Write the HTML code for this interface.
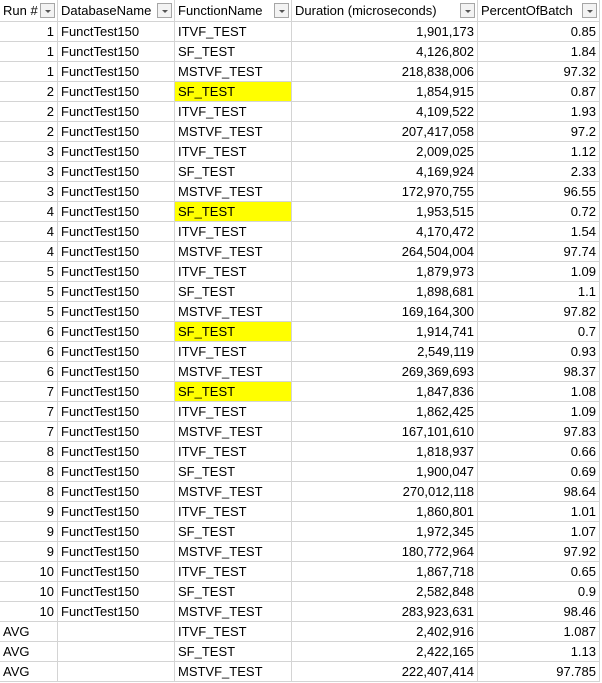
<!DOCTYPE html><html><head><style>
body{margin:0;background:#fff;font-family:"Liberation Sans",sans-serif;font-size:13px;color:#000}
table{border-collapse:separate;border-spacing:0;table-layout:fixed;width:600px}
td{box-sizing:border-box;height:20px;border-right:1px solid #d4d4d4;border-bottom:1px solid #d4d4d4;padding:0 3px;white-space:nowrap;overflow:hidden;line-height:19px}
tr.h td{height:22px;line-height:21px;position:relative}
.r{text-align:right}
.y{background:#ffff00}
.f{position:absolute;right:2px;top:3px;width:15px;height:15px;box-sizing:border-box;border:1px solid #a6a6a6;background:#f3f3f3}
.f:after{content:"";position:absolute;left:4px;top:6px;border-left:3px solid transparent;border-right:3px solid transparent;border-top:3px solid #555}
</style></head><body>
<table>
<colgroup><col style="width:58px"><col style="width:117px"><col style="width:117px"><col style="width:186px"><col style="width:122px"></colgroup>
<tr class="h"><td>Run #<span class="f"></span></td><td>DatabaseName<span class="f"></span></td><td>FunctionName<span class="f"></span></td><td>Duration (microseconds)<span class="f"></span></td><td>PercentOfBatch<span class="f"></span></td></tr>
<tr><td class="r">1</td><td>FunctTest150</td><td>ITVF_TEST</td><td class="r">1,901,173</td><td class="r">0.85</td></tr>
<tr><td class="r">1</td><td>FunctTest150</td><td>SF_TEST</td><td class="r">4,126,802</td><td class="r">1.84</td></tr>
<tr><td class="r">1</td><td>FunctTest150</td><td>MSTVF_TEST</td><td class="r">218,838,006</td><td class="r">97.32</td></tr>
<tr><td class="r">2</td><td>FunctTest150</td><td class="y">SF_TEST</td><td class="r">1,854,915</td><td class="r">0.87</td></tr>
<tr><td class="r">2</td><td>FunctTest150</td><td>ITVF_TEST</td><td class="r">4,109,522</td><td class="r">1.93</td></tr>
<tr><td class="r">2</td><td>FunctTest150</td><td>MSTVF_TEST</td><td class="r">207,417,058</td><td class="r">97.2</td></tr>
<tr><td class="r">3</td><td>FunctTest150</td><td>ITVF_TEST</td><td class="r">2,009,025</td><td class="r">1.12</td></tr>
<tr><td class="r">3</td><td>FunctTest150</td><td>SF_TEST</td><td class="r">4,169,924</td><td class="r">2.33</td></tr>
<tr><td class="r">3</td><td>FunctTest150</td><td>MSTVF_TEST</td><td class="r">172,970,755</td><td class="r">96.55</td></tr>
<tr><td class="r">4</td><td>FunctTest150</td><td class="y">SF_TEST</td><td class="r">1,953,515</td><td class="r">0.72</td></tr>
<tr><td class="r">4</td><td>FunctTest150</td><td>ITVF_TEST</td><td class="r">4,170,472</td><td class="r">1.54</td></tr>
<tr><td class="r">4</td><td>FunctTest150</td><td>MSTVF_TEST</td><td class="r">264,504,004</td><td class="r">97.74</td></tr>
<tr><td class="r">5</td><td>FunctTest150</td><td>ITVF_TEST</td><td class="r">1,879,973</td><td class="r">1.09</td></tr>
<tr><td class="r">5</td><td>FunctTest150</td><td>SF_TEST</td><td class="r">1,898,681</td><td class="r">1.1</td></tr>
<tr><td class="r">5</td><td>FunctTest150</td><td>MSTVF_TEST</td><td class="r">169,164,300</td><td class="r">97.82</td></tr>
<tr><td class="r">6</td><td>FunctTest150</td><td class="y">SF_TEST</td><td class="r">1,914,741</td><td class="r">0.7</td></tr>
<tr><td class="r">6</td><td>FunctTest150</td><td>ITVF_TEST</td><td class="r">2,549,119</td><td class="r">0.93</td></tr>
<tr><td class="r">6</td><td>FunctTest150</td><td>MSTVF_TEST</td><td class="r">269,369,693</td><td class="r">98.37</td></tr>
<tr><td class="r">7</td><td>FunctTest150</td><td class="y">SF_TEST</td><td class="r">1,847,836</td><td class="r">1.08</td></tr>
<tr><td class="r">7</td><td>FunctTest150</td><td>ITVF_TEST</td><td class="r">1,862,425</td><td class="r">1.09</td></tr>
<tr><td class="r">7</td><td>FunctTest150</td><td>MSTVF_TEST</td><td class="r">167,101,610</td><td class="r">97.83</td></tr>
<tr><td class="r">8</td><td>FunctTest150</td><td>ITVF_TEST</td><td class="r">1,818,937</td><td class="r">0.66</td></tr>
<tr><td class="r">8</td><td>FunctTest150</td><td>SF_TEST</td><td class="r">1,900,047</td><td class="r">0.69</td></tr>
<tr><td class="r">8</td><td>FunctTest150</td><td>MSTVF_TEST</td><td class="r">270,012,118</td><td class="r">98.64</td></tr>
<tr><td class="r">9</td><td>FunctTest150</td><td>ITVF_TEST</td><td class="r">1,860,801</td><td class="r">1.01</td></tr>
<tr><td class="r">9</td><td>FunctTest150</td><td>SF_TEST</td><td class="r">1,972,345</td><td class="r">1.07</td></tr>
<tr><td class="r">9</td><td>FunctTest150</td><td>MSTVF_TEST</td><td class="r">180,772,964</td><td class="r">97.92</td></tr>
<tr><td class="r">10</td><td>FunctTest150</td><td>ITVF_TEST</td><td class="r">1,867,718</td><td class="r">0.65</td></tr>
<tr><td class="r">10</td><td>FunctTest150</td><td>SF_TEST</td><td class="r">2,582,848</td><td class="r">0.9</td></tr>
<tr><td class="r">10</td><td>FunctTest150</td><td>MSTVF_TEST</td><td class="r">283,923,631</td><td class="r">98.46</td></tr>
<tr><td>AVG</td><td></td><td>ITVF_TEST</td><td class="r">2,402,916</td><td class="r">1.087</td></tr>
<tr><td>AVG</td><td></td><td>SF_TEST</td><td class="r">2,422,165</td><td class="r">1.13</td></tr>
<tr><td>AVG</td><td></td><td>MSTVF_TEST</td><td class="r">222,407,414</td><td class="r">97.785</td></tr>
</table>
</body></html>
